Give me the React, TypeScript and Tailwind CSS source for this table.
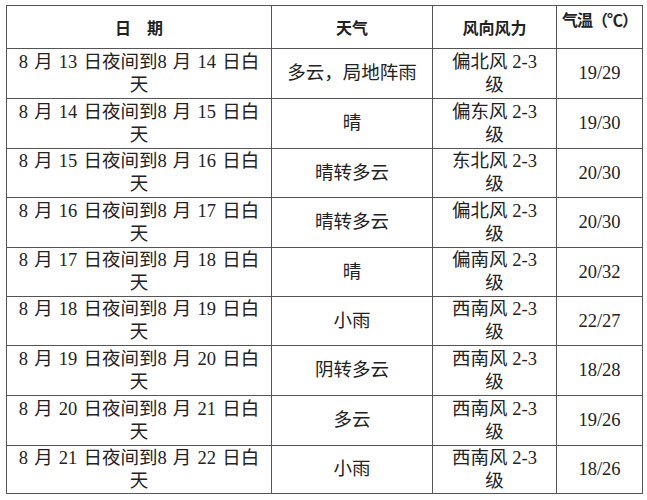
import React from "react";

const rows: { d1: string; d2: string; w: string; wind: string; t: string }[] = [
  { d1: "13", d2: "14", w: "多云，局地阵雨", wind: "偏北风", t: "19/29" },
  { d1: "14", d2: "15", w: "晴", wind: "偏东风", t: "19/30" },
  { d1: "15", d2: "16", w: "晴转多云", wind: "东北风", t: "20/30" },
  { d1: "16", d2: "17", w: "晴转多云", wind: "偏北风", t: "20/30" },
  { d1: "17", d2: "18", w: "晴", wind: "偏南风", t: "20/32" },
  { d1: "18", d2: "19", w: "小雨", wind: "西南风", t: "22/27" },
  { d1: "19", d2: "20", w: "阴转多云", wind: "西南风", t: "18/28" },
  { d1: "20", d2: "21", w: "多云", wind: "西南风", t: "19/26" },
  { d1: "21", d2: "22", w: "小雨", wind: "西南风", t: "18/26" },
];

const heights = [50, 50, 49, 50, 49, 49, 50, 50, 48];

export default function App() {
  return (
    <div
      className="bg-white w-[647px] h-[500px] pt-[5px] pl-[6px] text-[#222] text-[18.5px] leading-[23px]"
      style={{ fontFamily: '"Liberation Serif", "Noto Sans CJK SC", serif' }}
    >
      <table className="border-collapse table-fixed w-[636px]">
        <colgroup>
          <col className="w-[265px]" />
          <col className="w-[161px]" />
          <col className="w-[124px]" />
          <col className="w-[86px]" />
        </colgroup>
        <thead>
          <tr className="h-[43px] text-[16px]">
            <th className="border border-[#555] font-bold text-center align-middle p-0 pt-[3px]">日　期</th>
            <th className="border border-[#555] font-bold text-center align-middle p-0 pt-[3px]">天气</th>
            <th className="border border-[#555] font-bold text-center align-middle p-0 pt-[3px]">风向风力</th>
            <th className="border border-[#555] font-bold text-center align-top p-0 pt-[3px] whitespace-nowrap tracking-[-1px]">
              气温（℃）
            </th>
          </tr>
        </thead>
        <tbody>
          {rows.map((r, i) => (
            <tr key={i} style={{ height: heights[i] }}>
              <td className="border border-[#555] text-center align-middle p-0 whitespace-nowrap [word-spacing:1.5px]">
                8 月 {r.d1} 日夜间到8 月 {r.d2} 日白
                <br />天
              </td>
              <td className="border border-[#555] text-center align-middle p-0 whitespace-nowrap">{r.w}</td>
              <td className="border border-[#555] text-center align-middle p-0 whitespace-nowrap">
                {r.wind} 2-3
                <br />级
              </td>
              <td className="border border-[#555] text-center align-middle p-0">{r.t}</td>
            </tr>
          ))}
        </tbody>
      </table>
    </div>
  );
}
